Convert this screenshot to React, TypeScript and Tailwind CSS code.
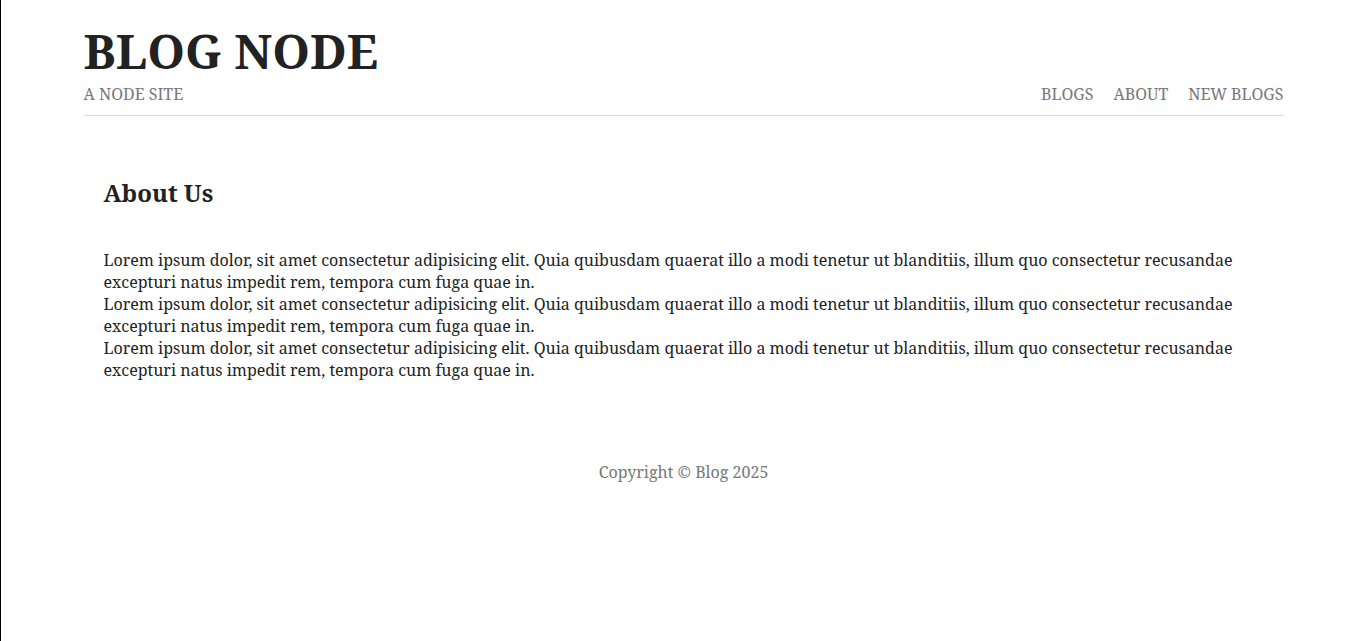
export default function App() {
  const para =
    "Lorem ipsum dolor, sit amet consectetur adipisicing elit. Quia quibusdam quaerat illo a modi tenetur ut blanditiis, illum quo consectetur recusandae excepturi natus impedit rem, tempora cum fuga quae in.";
  return (
    <div
      className="min-h-[641px] border-l border-black bg-white text-[#222]"
      style={{ fontFamily: '"Noto Serif", "DejaVu Serif", "Liberation Serif", serif' }}
    >
      <div className="mx-auto w-[1200px]">
        <header className="flex items-end justify-between border-b border-[#ddd] pt-[22px] pb-[10px]">
          <div>
            <h1 className="text-[48px] font-bold leading-[58px] text-[#222]">BLOG NODE</h1>
            <p className="mt-[3px] text-[16px] leading-[22px] text-[#777]">A NODE SITE</p>
          </div>
          <nav className="flex gap-[20px] text-[16px] leading-[22px] text-[#777]">
            <a>BLOGS</a>
            <a>ABOUT</a>
            <a>NEW BLOGS</a>
          </nav>
        </header>
        <main className="px-[20px] pt-[61px]">
          <h2 className="text-[24px] font-bold leading-[32px] text-[#222]">About Us</h2>
          <div className="mt-[40px] text-[16px] leading-[22px] text-[#222]">
            <p>{para}</p>
            <p>{para}</p>
            <p>{para}</p>
          </div>
        </main>
        <footer className="pt-[80px] text-center text-[16px] leading-[22px] text-[#777]">
          Copyright © Blog 2025
        </footer>
      </div>
    </div>
  );
}
